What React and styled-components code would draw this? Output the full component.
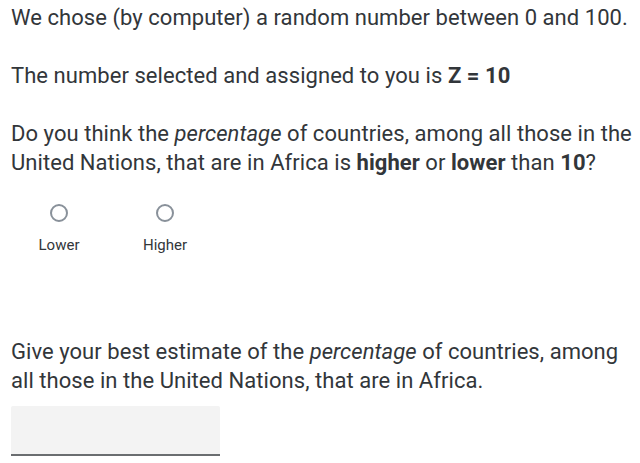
import React from 'react'
import styled, { createGlobalStyle } from 'styled-components'

const GlobalStyle = createGlobalStyle`
  html, body {
    margin: 0;
    padding: 0;
    background: #ffffff;
  }
  body {
    font-family: Roboto, "Liberation Sans", sans-serif;
    color: #32363a;
  }
`

const Page = styled.div`
  display: flex;
  flex-direction: column;
  padding: 0 4px 0 11px;
`

const Paragraph = styled.p`
  margin: 0;
  font-size: 22px;
  line-height: 29px;
  letter-spacing: 0.05px;
  margin-top: ${({ top }) => top || 0}px;
`

const Choices = styled.div`
  display: flex;
  margin-top: 27px;
`

const Choice = styled.label`
  display: flex;
  flex-direction: column;
  align-items: center;
  width: 96px;
  margin-right: 10px;
  gap: 14px;
  cursor: pointer;
`

const RadioCircle = styled.span`
  box-sizing: border-box;
  width: 18px;
  height: 18px;
  border-radius: 50%;
  border: 2px solid #89919a;
  background: #ffffff;
`

const ChoiceLabel = styled.span`
  font-size: 15px;
  line-height: 18px;
  color: #32363a;
`

const TextInput = styled.input`
  box-sizing: border-box;
  width: 209px;
  height: 50px;
  margin-top: 11px;
  border: none;
  border-bottom: 2px solid #6a6d70;
  border-radius: 2px 2px 0 0;
  background: #f3f3f3;
  outline: none;
  font-family: inherit;
  font-size: 16px;
  padding: 0 10px;
`

export default function App() {
  return (
    <>
      <GlobalStyle />
      <Page>
        <Paragraph top={3}>We chose (by computer) a random number between 0 and 100.</Paragraph>
        <Paragraph top={29}>
          The number selected and assigned to you is <b>Z = 10</b>
        </Paragraph>
        <Paragraph top={29}>
          Do you think the <i>percentage</i> of countries, among all those in the United Nations, that are in Africa is <b>higher</b> or <b>lower</b> than <b>10</b>?
        </Paragraph>
        <Choices>
          <Choice>
            <RadioCircle />
            <ChoiceLabel>Lower</ChoiceLabel>
          </Choice>
          <Choice>
            <RadioCircle />
            <ChoiceLabel>Higher</ChoiceLabel>
          </Choice>
        </Choices>
        <Paragraph top={83}>
          Give your best estimate of the <i>percentage</i> of countries, among all those in the United Nations, that are in Africa.
        </Paragraph>
        <TextInput type="text" />
      </Page>
    </>
  )
}
